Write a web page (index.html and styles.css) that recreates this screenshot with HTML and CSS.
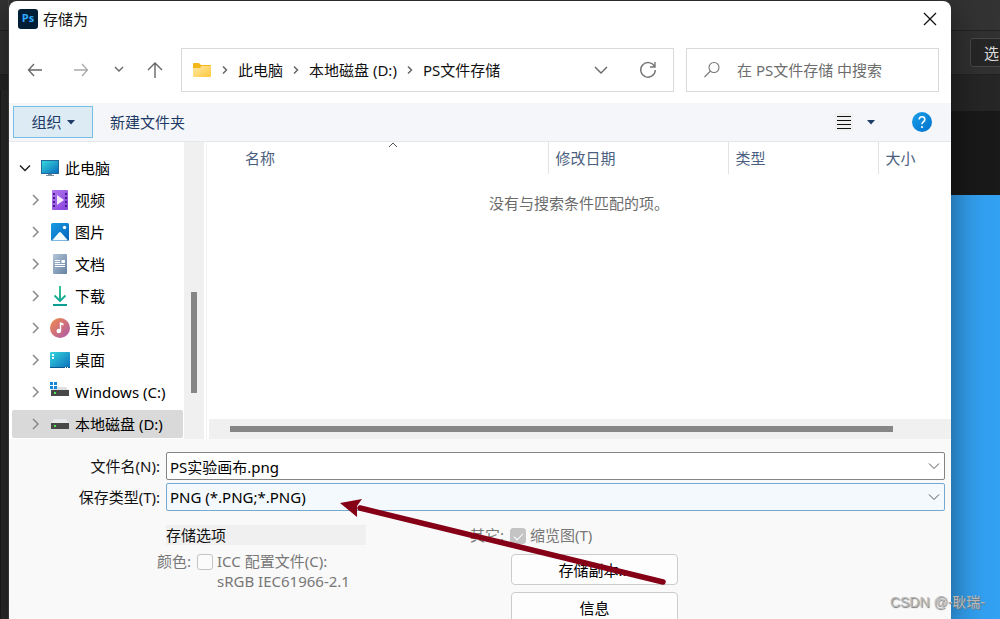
FILE: index.html
```html
<!DOCTYPE html>
<html lang="zh-CN">
<head>
<meta charset="utf-8">
<title>存储为</title>
<link rel="stylesheet" href="styles.css">
</head>
<body>
<div class="edge-left"><div class="strip-menu"></div><div class="strip-bar"></div><div class="strip-tabs"></div><div class="strip-tools"></div></div>
<main class="dialog">
  <header class="titlebar">
    <svg class="app-icon" width="20" height="20" viewBox="0 0 20 20"><rect width="20" height="20" rx="3" fill="#001e36"/><text x="10" y="13" text-anchor="middle" class="app-letters">Ps</text></svg>
    <h1 class="title">存储为</h1>
    <button class="plain" aria-label="关闭"><svg width="14" height="14" viewBox="0 0 14 14" fill="none" stroke="#111" stroke-width="1.3"><path d="M1 1L13 13M13 1L1 13"/></svg></button>
  </header>

  <nav class="navbar">
    <div class="nav-buttons">
      <button class="plain" aria-label="后退"><svg width="16" height="16" viewBox="0 0 16 16" fill="none" stroke="#666" stroke-width="1.3"><path d="M15 8H1.5M7 2L1.5 8L7 14"/></svg></button>
      <button class="plain" aria-label="前进"><svg width="16" height="16" viewBox="0 0 16 16" fill="none" stroke="#aaa" stroke-width="1.3"><path d="M1 8H14.5M9 2L14.5 8L9 14"/></svg></button>
      <button class="plain" aria-label="最近"><svg width="16" height="16" viewBox="0 0 16 16" fill="none" stroke="#666" stroke-width="1.4"><path d="M4 5L8 9L12 5"/></svg></button>
      <button class="plain" aria-label="上移"><svg width="16" height="18" viewBox="0 0 16 18" fill="none" stroke="#666" stroke-width="1.4"><path d="M8 17V2M1 9L8 2L15 9"/></svg></button>
    </div>
    <div class="address">
      <svg width="20" height="16" viewBox="0 0 20 16"><defs><linearGradient id="fold" x2="1" y2="1"><stop stop-color="#ffe9a6"/><stop offset="1" stop-color="#ffc83d"/></linearGradient></defs><path d="M1 2Q1 1 2 1H7L9 3H18Q19 3 19 4V8H1z" fill="#f5b61a"/><path d="M1 6H8L9.500 4H18Q19 4 19 5V14Q19 15 18 15H2Q1 15 1 14z" fill="url(#fold)"/></svg>
      <svg class="crumb-sep" width="8" height="10" viewBox="0 0 8 10"><path d="M2 1.500L5.500 5L2 8.500"/></svg>
      <a href="#" class="crumb">此电脑</a>
      <svg class="crumb-sep" width="8" height="10" viewBox="0 0 8 10"><path d="M2 1.500L5.500 5L2 8.500"/></svg>
      <a href="#" class="crumb">本地磁盘 (D:)</a>
      <svg class="crumb-sep" width="8" height="10" viewBox="0 0 8 10"><path d="M2 1.500L5.500 5L2 8.500"/></svg>
      <a href="#" class="crumb">PS文件存储</a>
      <div class="address-tools">
        <button class="plain" aria-label="以前的位置"><svg width="14" height="10" viewBox="0 0 14 10" fill="none" stroke="#666" stroke-width="1.4"><path d="M1 2L7 8L13 2"/></svg></button>
        <button class="plain" aria-label="刷新"><svg width="18" height="18" viewBox="0 0 18 18" fill="none" stroke="#777" stroke-width="1.400"><path d="M15.500 5.500A7.300 7.300 0 1 0 16.300 9M16 1V6H11"/></svg></button>
      </div>
    </div>
    <label class="search">
      <svg width="18" height="18" viewBox="0 0 18 18" fill="none" stroke="#777" stroke-width="1.1"><circle cx="11" cy="6.500" r="5"/><path d="M7.500 10L1.500 16"/></svg>
      <input type="text" class="search-input" aria-label="搜索" placeholder="在 PS文件存储 中搜索">
    </label>
  </nav>

  <div class="toolbar">
    <button class="organize">组织<svg width="8" height="5" viewBox="0 0 8 5"><path d="M0 0H8L4 4.500z" fill="#1e3a66"/></svg></button>
    <button class="plain tool-text">新建文件夹</button>
    <div class="toolbar-end">
      <button class="plain view" aria-label="视图"><svg width="18" height="18" viewBox="0 0 18 18"><rect width="18" height="18" fill="#f1f1f1"/><path d="M2 3.500H16M2 7.500H16M2 11.500H16M2 15.500H16" stroke="#111"/></svg></button>
      <button class="plain view-more" aria-label="更多选项"><svg width="8" height="5" viewBox="0 0 8 5"><path d="M0 0H8L4 4.500z" fill="#1e3a66"/></svg></button>
      <button class="plain" aria-label="帮助"><svg width="20" height="20" viewBox="0 0 20 20"><defs><linearGradient id="help" x2="1" y2="1"><stop stop-color="#1ba0ea"/><stop offset="1" stop-color="#0070cd"/></linearGradient></defs><circle cx="10" cy="10" r="10" fill="url(#help)"/><path d="M7.200 7.500Q7.200 4.800 10 4.800Q12.800 4.800 12.800 7.400Q12.800 8.800 11.200 10Q10 11 10 12.300" fill="none" stroke="#fff" stroke-width="1.600"/><circle cx="10" cy="15" r="1.100" fill="#fff"/></svg></button>
    </div>
  </div>

  <section class="browser">
    <ul class="tree">
      <li class="node root"><svg class="twist open" width="12" height="12" viewBox="0 0 12 12"><path d="M1 3.500L6 8.500L11 3.500"/></svg><svg width="20" height="20" viewBox="0 0 20 20"><defs><linearGradient id="scr" x2="1" y2="1"><stop stop-color="#35d8dc"/><stop offset="1" stop-color="#0a6cbd"/></linearGradient></defs><path d="M8 16H12V17H14V18H6V17H8z" fill="#78909c"/><rect x="1" y="2" width="18" height="14" fill="#24699a"/><rect x="2" y="3" width="16" height="12" fill="url(#scr)"/></svg>此电脑</li>
      <li class="node"><svg class="twist" width="12" height="12" viewBox="0 0 12 12"><path d="M4 1L9 6L4 11"/></svg><svg width="20" height="20" viewBox="0 0 20 20"><defs><linearGradient id="vid" y2="1"><stop stop-color="#b47af0"/><stop offset="1" stop-color="#8540dc"/></linearGradient></defs><rect x="2" width="16" height="20" rx="1" fill="url(#vid)"/><path d="M7 5V15L14 10z" fill="#f5e9ff"/><path d="M4 3V18M16 3V18" stroke="#45208a" stroke-width="2" stroke-dasharray="2 2"/></svg>视频</li>
      <li class="node"><svg class="twist" width="12" height="12" viewBox="0 0 12 12"><path d="M4 1L9 6L4 11"/></svg><svg width="20" height="20" viewBox="0 0 20 20"><defs><linearGradient id="pic" x2="1" y2="1"><stop stop-color="#189be5"/><stop offset="1" stop-color="#0762b8"/></linearGradient></defs><rect x="1" y="1" width="18" height="18" rx="1.500" fill="url(#pic)"/><path d="M2 18.500L9 10.500Q10 9.500 11 10.500L18 18.500z" fill="#f2fbff"/><circle cx="14.500" cy="5.500" r="1.700" fill="#fff"/></svg>图片</li>
      <li class="node"><svg class="twist" width="12" height="12" viewBox="0 0 12 12"><path d="M4 1L9 6L4 11"/></svg><svg width="20" height="20" viewBox="0 0 20 20"><defs><linearGradient id="doc" x2="1" y2="1"><stop stop-color="#b3c5d9"/><stop offset="1" stop-color="#6581a1"/></linearGradient></defs><rect x="3" width="14" height="20" rx="1" fill="url(#doc)"/><path d="M5 6.500H10M5 8.500H10M5 10.500H15M5 12.500H15" stroke="#fff"/><rect x="11.500" y="6" width="3.500" height="3" fill="#fff"/></svg>文档</li>
      <li class="node"><svg class="twist" width="12" height="12" viewBox="0 0 12 12"><path d="M4 1L9 6L4 11"/></svg><svg width="20" height="20" viewBox="0 0 20 20"><defs><linearGradient id="down" gradientUnits="userSpaceOnUse" x1="0" y1="0" x2="0" y2="20"><stop stop-color="#26c38f"/><stop offset="1" stop-color="#0c9c94"/></linearGradient></defs><path d="M10 0V15M4.500 9.500L10 15L15.500 9.500M3 19H17" fill="none" stroke="url(#down)" stroke-width="1.900"/></svg>下载</li>
      <li class="node"><svg class="twist" width="12" height="12" viewBox="0 0 12 12"><path d="M4 1L9 6L4 11"/></svg><svg width="20" height="20" viewBox="0 0 20 20"><defs><linearGradient id="mus" x2="1" y2="1"><stop stop-color="#f48b48"/><stop offset="1" stop-color="#aa57ae"/></linearGradient></defs><circle cx="10" cy="10" r="10" fill="url(#mus)"/><circle cx="8.800" cy="13" r="2.300" fill="#fff"/><path d="M9.800 13V4L13.500 5.500V7.500L11.200 6.800V13z" fill="#fff"/></svg>音乐</li>
      <li class="node"><svg class="twist" width="12" height="12" viewBox="0 0 12 12"><path d="M4 1L9 6L4 11"/></svg><svg width="20" height="20" viewBox="0 0 20 20"><rect y="2" width="20" height="16" rx="1" fill="url(#scr)"/><path d="M0 17H20V17.500Q20 18 19 18H1Q0 18 0 17.500z" fill="#0a568f"/><path d="M2 4H4V6H2zM2 7H4V9H2zM15 17H16V18H15zM17 17H18V18H17z" fill="#fff"/></svg>桌面</li>
      <li class="node"><svg class="twist" width="12" height="12" viewBox="0 0 12 12"><path d="M4 1L9 6L4 11"/></svg><svg width="20" height="20" viewBox="0 0 20 20"><path d="M4 5H16L19 9H1z" fill="#dde0e4"/><rect x="1" y="8" width="18" height="6" fill="#484848"/><rect x="4" y="10" width="2" height="2" fill="#4bea55"/><path d="M0 0H3V3H0zM4 0H7V3H4zM0 4H3V7H0zM4 4H7V7H4z" fill="#1687d9"/></svg>Windows (C:)</li>
      <li class="node selected"><svg class="twist" width="12" height="12" viewBox="0 0 12 12"><path d="M4 1L9 6L4 11"/></svg><svg width="20" height="20" viewBox="0 0 20 20"><path d="M4 5H16L19 9H1z" fill="#e6e8ec"/><rect x="1" y="9" width="18" height="6" fill="#484848"/><rect x="4" y="11" width="2" height="2" fill="#4bea55"/></svg>本地磁盘 (D:)</li>
    </ul>
    <div class="vscroll"><div class="vthumb"></div></div>
    <div class="files">
      <table class="list">
        <thead><tr><th class="col-name">名称<svg class="sort" width="10" height="6" viewBox="0 0 10 6"><path d="M1 5L5 1L9 5" fill="none" stroke="#555"/></svg></th><th class="col-date">修改日期</th><th class="col-type">类型</th><th>大小</th></tr></thead>
        <tbody><tr><td colspan="4">没有与搜索条件匹配的项。</td></tr></tbody>
      </table>
      <div class="hscroll"><div class="hthumb"></div></div>
    </div>
  </section>

  <form class="form">
    <div class="field">
      <label for="name">文件名(N):</label>
      <div class="box"><input id="name" class="control" type="text" value="PS实验画布.png"><svg class="drop" width="12" height="8" viewBox="0 0 12 8"><path d="M1 1.500L6 6.500L11 1.500"/></svg></div>
    </div>
    <div class="field">
      <label for="type">保存类型(T):</label>
      <div class="box"><select id="type" class="control type"><option>PNG (*.PNG;*.PNG)</option></select><svg class="drop" width="12" height="8" viewBox="0 0 12 8"><path d="M1 1.500L6 6.500L11 1.500"/></svg></div>
    </div>
    <div class="options">
      <div class="group-color">
        <h2 class="group-title">存储选项</h2>
        <div class="option">
          <span class="option-name">颜色:</span>
          <input id="icc" class="check" type="checkbox" disabled>
          <label for="icc">ICC 配置文件(C):<br>sRGB IEC61966-2.1</label>
        </div>
      </div>
      <div class="group-other">
        <div class="option">
          <span class="option-name">其它:</span>
          <input id="thumb" class="check" type="checkbox" checked disabled>
          <label for="thumb">缩览图(T)</label>
        </div>
        <button type="button" class="action">存储副本...</button>
        <button type="button" class="action">信息</button>
      </div>
    </div>
  </form>
</main>
<aside class="edge-right">
  <div class="host-menu"></div>
  <div class="host-bar"><button class="host-button">选</button></div>
  <div class="host-tabs"></div>
  <div class="host-dark"></div>
  <div class="host-canvas"></div>
</aside>
<svg class="arrow" width="330" height="90" viewBox="0 0 330 90"><path d="M20 8L323 82" stroke="#850016" stroke-width="5.500" stroke-linecap="round"/><path d="M0 3L22 -1L17 6L17 17z" fill="#850016"/></svg>
<p class="watermark">CSDN @-耿瑞-</p>
</body>
</html>
```
FILE: styles.css
```css
* { box-sizing: border-box; }

body {
  position: relative;
  margin: 0;
  height: 100vh;
  overflow: hidden;
  display: grid;
  grid-template-columns: 9px 1fr 49px;
  background: #333;
  color: #111;
  font: 15px/20px "Noto Sans", "Noto Sans CJK SC", sans-serif;
}

button, input, select { font: inherit; color: inherit; }
h1, h2, p, ul { margin: 0; padding: 0; font: inherit; }
svg { flex: none; display: block; }

.plain {
  display: flex;
  align-items: center;
  justify-content: center;
  padding: 0;
  border: 0;
  background: none;
}

.edge-left { display: flex; flex-direction: column; background: #2b2b2b; border-right: 1px solid #444; }
.strip-menu { height: 31px; background: #333; border-bottom: 1px solid #222; }
.strip-bar { height: 44px; background: #313131; border-bottom: 1px solid #222; }
.strip-tabs { height: 15px; background: #262626; }
.strip-tools { flex: 1; border-left: 1px solid #1c1c1c; }

.dialog {
  position: relative;
  margin-top: 1px;
  display: flex;
  flex-direction: column;
  min-width: 0;
  background: #fff;
  border-radius: 8px 8px 0 0;
  z-index: 1;
  box-shadow: 0 8px 36px rgba(0, 0, 0, 0.5);
}

.titlebar { display: flex; align-items: center; height: 36px; padding: 0 14px 0 9px; gap: 5px; }
.title { flex: 1; }
.app-letters { font: bold 11px "Open Sans", sans-serif; fill: #31a8ff; }

.navbar { display: flex; padding: 11px 12px; }
.nav-buttons { display: flex; align-items: center; width: 160px; padding-left: 6px; gap: 30px; }
.nav-buttons .plain:nth-child(n+3) { margin-left: -8px; }
.nav-buttons .plain:nth-child(4) { margin-left: -10px; }
.address { flex: 1; display: flex; align-items: center; height: 44px; border: 1px solid #d9d9d9; padding: 0 16px 0 10px; }
.crumb { color: #111; text-decoration: none; white-space: nowrap; }
.crumb-sep { margin: 0 9px; fill: none; stroke: #666; stroke-width: 1.5; }
.address-tools { margin-left: auto; display: flex; gap: 31px; }
.search { display: flex; align-items: center; width: 253px; height: 44px; margin-left: 12px; padding-left: 16px; border: 1px solid #d9d9d9; gap: 16px; }
.search-input { flex: 1; min-width: 0; padding: 0; border: 0; background: none; outline: 0; }
.search-input::placeholder { color: #6d6d6d; opacity: 1; }

.toolbar { display: flex; align-items: center; height: 39px; padding: 0 19px 0 4px; background: #f4f6f9; border-bottom: 1px solid #e5e7ea; color: #1e3a66; }
.organize { display: flex; align-items: center; justify-content: center; gap: 5px; width: 80px; height: 32px; padding: 0; border: 1px solid #74bfe3; background: #dcebf4; }
.tool-text { margin-left: 17px; }
.toolbar-end { display: flex; align-items: center; margin-left: auto; }
.view-more { margin: 0 37px 0 14px; }

.browser { display: flex; height: 297px; }
.tree { width: 175px; padding: 12px 1px 0 3px; list-style: none; display: flex; flex-direction: column; gap: 4px; }
.node { display: flex; align-items: center; gap: 5px; height: 28px; padding-left: 17px; border-radius: 2px; white-space: nowrap; color: #000; }
.root { padding-left: 7px; }
.selected { background: #d9d9d9; }
.twist { margin-right: 4px; fill: none; stroke: #8a8a8a; stroke-width: 1.5; }
.open { stroke: #222; }
.vscroll { width: 20px; padding: 150px 7px 0; background: #f0f0f0; }
.vthumb { height: 101px; background: #868686; }
.files { flex: 1; display: flex; flex-direction: column; justify-content: space-between; margin-left: 2px; border-left: 1px solid #f3f3f3; }
.list { width: 100%; table-layout: fixed; border-collapse: collapse; }
.list th { position: relative; height: 32px; padding: 0 0 0 7px; border-left: 1px solid #e3e3e3; text-align: left; font-weight: 400; color: #4b6080; }
.list .col-name { width: 341px; padding-left: 38px; border-left: 0; }
.col-date { width: 180px; }
.col-type { width: 150px; }
.sort { position: absolute; left: 181px; top: 0; }
.list td { padding: 19px 0 0; text-align: center; color: #6b6b6b; }
.hscroll { height: 20px; margin-left: 2px; padding: 7px 58px 0 21px; background: #f0f0f0; }
.hthumb { height: 6px; background: #868686; }

.form { flex: 1; display: flex; flex-direction: column; gap: 3px; padding: 13px 6px 0 0; background: #f9f9f9; }
.field { display: grid; grid-template-columns: 151px 1fr; column-gap: 6px; align-items: center; text-align: right; }
.box { position: relative; text-align: left; }
.control { display: block; width: 100%; height: 28px; padding: 0 3px; border: 1px solid #858585; border-radius: 2px; background: #fff; color: #000; outline: 0; appearance: none; }
.type { border-color: #77a9d0; background: #f3f9fd; }
.drop { position: absolute; right: 5px; top: 10px; fill: none; stroke: #555; pointer-events: none; }

.options { display: flex; gap: 104px; padding: 11px 0 0 148px; color: #777; }
.group-color { width: 209px; }
.group-title { margin: 0 0 6px 9px; background: #f0f0f0; color: #111; }
.option { display: flex; gap: 4px; white-space: nowrap; }
.option-name { width: 36px; }
.check { appearance: none; width: 16px; height: 16px; margin: 3px 0 0; border: 1px solid #c4c4c4; border-radius: 3px; background: #fbfbfb; }
.check:checked { background: #c4c4c4; display: grid; place-items: center; }
.check:checked::after { content: ""; width: 8px; height: 4px; margin-bottom: 2px; border: solid #fff; border-width: 0 0 1px 1px; transform: rotate(-45deg); }
.group-other { display: flex; flex-direction: column; gap: 7px; }
.group-other .option { margin-bottom: 2px; }
.action { width: 167px; height: 31px; margin-left: 41px; padding: 0; border: 1px solid #ccc; border-radius: 4px; background: #fdfdfd; color: #000; }

.edge-right { display: flex; flex-direction: column; overflow: hidden; }
.host-menu { height: 31px; background: #333; border-bottom: 1px solid #222; }
.host-bar { height: 44px; padding: 7px 0 0 19px; background: #313131; border-bottom: 1px solid #222; }
.host-button { width: 60px; height: 29px; padding: 0 0 0 13px; border: 1px solid #484848; border-radius: 3px; background: #262626; color: #ddd; text-align: left; }
.host-tabs { height: 36px; background: #262626; }
.host-dark { height: 84px; background: #191919; }
.host-canvas { flex: 1; background: #33a1f2; }

.arrow { position: absolute; left: 340px; top: 500px; z-index: 2; overflow: visible; }
.watermark { position: absolute; right: 15px; bottom: 7px; z-index: 2; font-family: "Liberation Sans", "Noto Sans CJK SC", sans-serif; font-size: 14px; color: #b8b8b8; text-shadow: 1px 1px 1px #777; }
```
